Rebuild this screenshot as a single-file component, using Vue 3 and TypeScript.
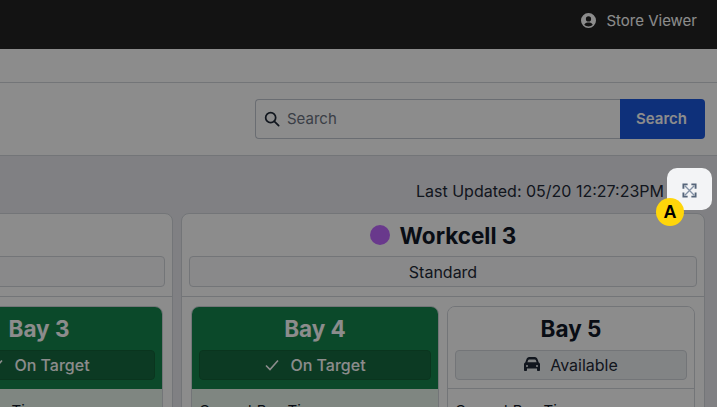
<script setup lang="ts">
type Bay = {
  name: string
  status: 'target' | 'available'
  label: string
}

type Workcell = {
  name: string
  dot: string
  shift: string
  bays: Bay[]
}

const workcells: Workcell[] = [
  {
    name: 'Workcell 2',
    dot: '#16a34a',
    shift: 'Standard',
    bays: [
      { name: 'Bay 2', status: 'target', label: 'On Target' },
      { name: 'Bay 3', status: 'target', label: 'On Target' },
    ],
  },
  {
    name: 'Workcell 3',
    dot: '#c069ff',
    shift: 'Standard',
    bays: [
      { name: 'Bay 4', status: 'target', label: 'On Target' },
      { name: 'Bay 5', status: 'available', label: 'Available' },
    ],
  },
]
</script>

<template>
  <div class="page">
    <header class="topbar">
      <div class="user">
        <svg class="user-icon" viewBox="0 0 512 512" aria-hidden="true">
          <path
            fill="currentColor"
            d="M256 0a256 256 0 1 0 0 512 256 256 0 1 0 0-512zM166 204a90 90 0 1 1 180 0 90 90 0 1 1-180 0zM256 464c-56 0-107-22-144-59 14-47 58-81 109-81h70c51 0 95 34 109 81-37 37-88 59-144 59z"
          />
        </svg>
        <span>Store Viewer</span>
      </div>
    </header>

    <div class="subnav"></div>

    <section class="search-band">
      <form class="search" @submit.prevent>
        <label class="search-field">
          <svg class="search-icon" viewBox="0 0 24 24" aria-hidden="true">
            <circle cx="10" cy="10" r="7.5" />
            <path d="M15.5 15.5l6.5 6.5" />
          </svg>
          <input type="text" placeholder="Search" />
        </label>
        <button type="submit" class="search-btn">Search</button>
      </form>
    </section>

    <div class="toolbar">
      <span class="updated">Last Updated: 05/20 12:27:23PM</span>
      <button type="button" class="expand">
        <svg viewBox="0 0 16 16" aria-hidden="true">
          <path class="cross" d="M3 3l10 10M13 3L3 13" />
          <path d="M1.5 6V1.5H6M14.5 6V1.5H10M1.5 10v4.5H6M14.5 10v4.5H10" />
        </svg>
        <span class="badge">A</span>
      </button>
    </div>

    <main class="cells">
      <article v-for="cell in workcells" :key="cell.name" class="cell">
        <div class="cell-head">
          <h2 class="cell-title">
            <span class="dot" :style="{ background: cell.dot }"></span>
            {{ cell.name }}
          </h2>
          <div class="shift">{{ cell.shift }}</div>
        </div>
        <div class="bays">
          <div
            v-for="bay in cell.bays"
            :key="bay.name"
            class="bay"
            :class="{ 'on-target': bay.status === 'target' }"
          >
            <div class="bay-head">
              <h3 class="bay-title">{{ bay.name }}</h3>
              <div class="bay-status">
                <svg v-if="bay.status === 'target'" class="check" viewBox="0 0 16 16" aria-hidden="true">
                  <path d="M2 8.5l4 4 8-9" />
                </svg>
                <svg v-else class="car" viewBox="0 0 512 512" aria-hidden="true">
                  <path
                    fill="currentColor"
                    d="M135 97L109 171h294l-26-74c-5-13-17-21-30-21H165c-13 0-25 8-30 21zM40 177l35-101C89 30 124 0 165 0h182c41 0 76 30 90 76l35 101c24 10 40 33 40 60v179c0 18-14 32-32 32h-32c-18 0-32-14-32-32v-48H96v48c0 18-14 32-32 32H32c-18 0-32-14-32-32V237c0-27 16-50 40-60zM128 288a32 32 0 1 0-64 0 32 32 0 1 0 64 0zm288 32a32 32 0 1 0 0-64 32 32 0 1 0 0 64z"
                  />
                </svg>
                <span>{{ bay.label }}</span>
              </div>
            </div>
            <div class="bay-body">Current Bay Time</div>
          </div>
        </div>
      </article>
    </main>

    <div class="overlay"></div>
  </div>
</template>

<style scoped>
.page {
  position: relative;
  width: 717px;
  height: 407px;
  overflow: hidden;
  background: #e9eaee;
  font-family: Inter, 'Liberation Sans', sans-serif;
  color: #111827;
}

.topbar {
  height: 49px;
  box-sizing: border-box;
  display: flex;
  align-items: center;
  justify-content: flex-end;
  padding: 0 20px 8px 0;
  background: #242424;
  color: #fff;
  font-size: 15px;
}

.user {
  display: flex;
  align-items: center;
  gap: 10px;
}

.user-icon {
  width: 15px;
  height: 15px;
}

.subnav {
  height: 33px;
  background: #fff;
  border-bottom: 1px solid #d1d5db;
}

.search-band {
  height: 73px;
  box-sizing: border-box;
  display: flex;
  justify-content: flex-end;
  padding: 16px 12px 0 0;
  background: #fff;
  border-bottom: 1px solid #d1d5db;
}

.search {
  display: flex;
  width: 450px;
  height: 40px;
}

.search-field {
  flex: 1;
  display: flex;
  align-items: center;
  gap: 7px;
  padding-left: 8px;
  border: 1px solid #c2c7d0;
  border-right: none;
  border-radius: 4px 0 0 4px;
}

.search-icon {
  width: 16px;
  height: 16px;
  fill: none;
  stroke: #1f2937;
  stroke-width: 2.6;
  stroke-linecap: round;
}

.search-field input {
  flex: 1;
  min-width: 0;
  padding: 0 0 2px;
  border: none;
  outline: none;
  background: transparent;
  font: inherit;
  font-size: 15px;
}

.search-field input::placeholder {
  color: #6b7280;
  opacity: 1;
}

.search-btn {
  width: 85px;
  padding: 0 2px 2px 0;
  border: none;
  border-radius: 0 4px 4px 0;
  background: #1b58de;
  color: #fff;
  font: inherit;
  font-size: 15px;
  font-weight: 600;
}

.toolbar {
  height: 57px;
  box-sizing: border-box;
  display: flex;
  justify-content: flex-end;
  align-items: flex-start;
  padding: 12px 5px 0 0;
  gap: 3px;
}

.updated {
  margin-top: 13px;
  font-size: 16px;
  line-height: 20px;
  color: #1f2937;
}

.expand {
  position: relative;
  z-index: 11;
  width: 45px;
  height: 42px;
  padding: 3px 0 0;
  display: flex;
  align-items: center;
  justify-content: center;
  border: none;
  border-radius: 10px;
  background: #f3f4f6;
}

.expand svg {
  width: 15px;
  height: 15px;
  fill: none;
  stroke: #56657a;
  stroke-width: 2;
}

.expand .cross {
  stroke: #8492a6;
  stroke-width: 1.4;
}

.badge {
  position: absolute;
  left: -11px;
  top: 30px;
  width: 28px;
  height: 28px;
  border-radius: 50%;
  display: flex;
  align-items: center;
  justify-content: center;
  background: #ffd60a;
  color: #000;
  font-size: 18px;
  font-weight: 800;
}

.cells {
  display: flex;
  justify-content: flex-end;
  gap: 8px;
  padding-right: 12px;
}

.cell {
  flex: none;
  width: 524px;
  box-sizing: border-box;
  height: 400px;
  background: #fff;
  border: 1px solid #d1d5db;
  border-radius: 8px;
}

.cell-head {
  height: 83px;
  box-sizing: border-box;
  padding: 0 7px;
  border-bottom: 1px solid #d1d5db;
}

.cell-title {
  margin: 0;
  height: 42px;
  display: flex;
  align-items: center;
  justify-content: center;
  gap: 10px;
  font-size: 22.5px;
  font-weight: 700;
}

.dot {
  width: 20px;
  height: 20px;
  border-radius: 50%;
}

.shift {
  height: 31px;
  box-sizing: border-box;
  display: flex;
  align-items: center;
  justify-content: center;
  border: 1px solid #d1d5db;
  border-radius: 4px;
  background: #f9fafb;
  font-size: 16px;
  color: #1f2937;
}

.bays {
  display: grid;
  grid-template-columns: repeat(2, 1fr);
  gap: 8px;
  padding: 9px;
}

.bay {
  border: 1px solid #d1d5db;
  border-radius: 8px;
  overflow: hidden;
}

.bay.on-target {
  border-color: #d1d5db;
  background: #e7f5ec;
}

.bay-head {
  height: 82px;
  box-sizing: border-box;
  padding: 0 7px;
  border-bottom: 1px solid #d1d5db;
  background: #fff;
}

.on-target .bay-head {
  background: #15864e;
  border-bottom-color: #15864e;
  color: #fff;
}

.bay-title {
  margin: 0;
  height: 43px;
  display: flex;
  align-items: center;
  justify-content: center;
  font-size: 22.5px;
  font-weight: 700;
}

.bay-status {
  height: 30px;
  box-sizing: border-box;
  display: flex;
  align-items: center;
  justify-content: center;
  gap: 10px;
  border: 1px solid #d1d5db;
  border-radius: 4px;
  background: #edf0f2;
  font-size: 16px;
  color: #1f2937;
}

.on-target .bay-status {
  background: #166b41;
  border-color: #136238;
  color: #fff;
  font-weight: 500;
}

.check {
  width: 16px;
  height: 16px;
  fill: none;
  stroke: currentColor;
  stroke-width: 1.6;
}

.car {
  width: 16px;
  height: 16px;
}

.bay-body {
  padding: 12px 7px;
  font-size: 15px;
  color: #111827;
}

.overlay {
  position: absolute;
  inset: 0;
  z-index: 10;
  background: rgba(0, 0, 0, 0.45);
}
</style>
